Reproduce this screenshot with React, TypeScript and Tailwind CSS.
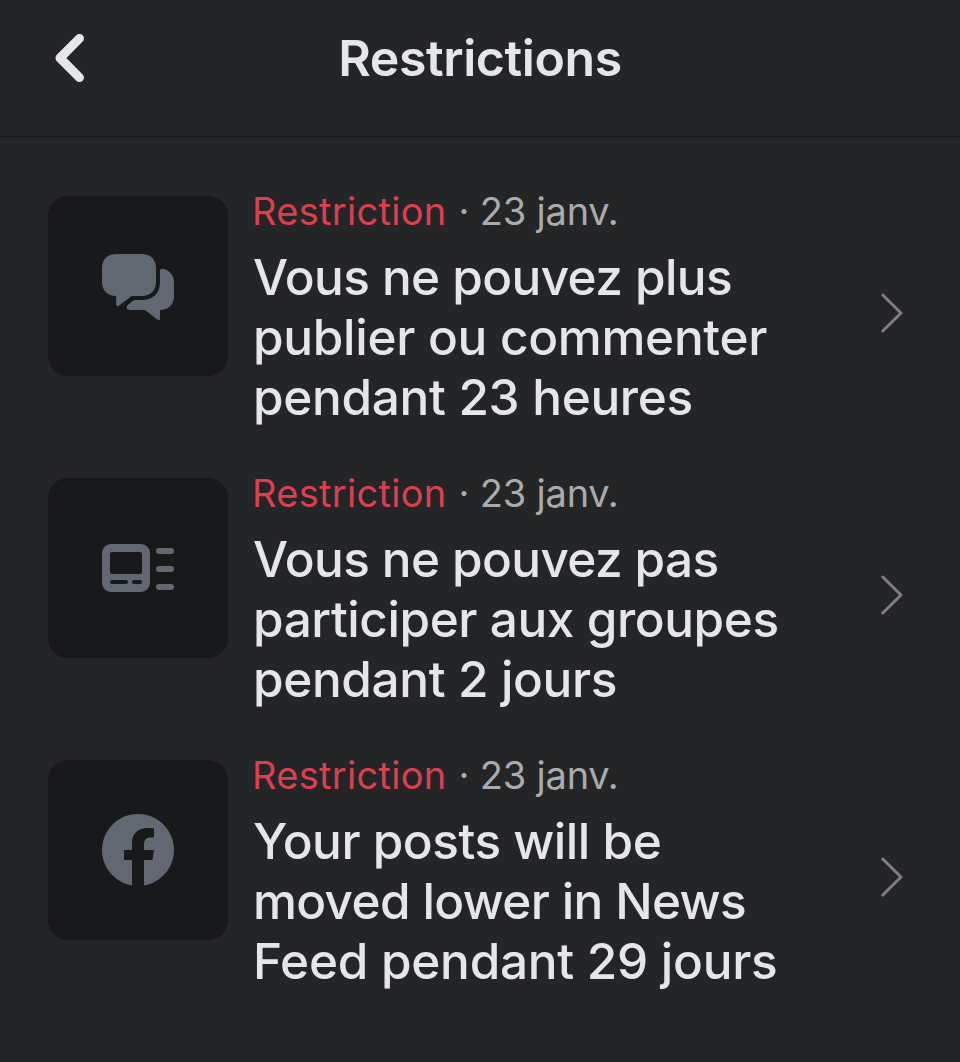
import React from "react";

function CommentsIcon() {
    return (
        <svg width="72" height="72" viewBox="0 0 72 72" fill="currentColor">
            <path d="M14 4H40C48.500 4 54 9.500 54 18V32C54 40.500 48.500 46 40 46H29.700L17 55.600C15.500 56.700 14.200 56 14.200 54.400V46C5.500 46 0 40.500 0 32V18C0 9.500 5.500 4 14 4Z" />
            <path d="M58 21C58 19.200 59.200 18.400 61 18.800C67.500 20.300 72 25.500 72 32V46C72 54.500 66.500 60 58 60V68.500C58 70.200 56.500 70.500 55.200 69.500L43 60H28C24.600 60 23.600 57 25.800 55L30.500 51C31.300 50.300 32 50 33 50H40C51 50 58 43 58 32Z" />
        </svg>
    );
}

function FeedIcon() {
    return (
        <svg width="72" height="72" viewBox="0 0 72 72" fill="currentColor">
            <path
                fillRule="evenodd"
                d="M9 12H39A9 9 0 0 1 48 21V51A9 9 0 0 1 39 60H9A9 9 0 0 1 0 51V21A9 9 0 0 1 9 12ZM10 20A2 2 0 0 0 8 22V40A2 2 0 0 0 10 42H38A2 2 0 0 0 40 40V22A2 2 0 0 0 38 20ZM10 48A2 2 0 0 0 10 52H24A2 2 0 0 0 24 48ZM32 48A2 2 0 0 0 32 52H38A2 2 0 0 0 38 48Z"
            />
            <rect x="54" y="16" width="18" height="6" rx="3" />
            <rect x="54" y="34" width="18" height="6" rx="3" />
            <rect x="54" y="52" width="18" height="6" rx="3" />
        </svg>
    );
}

function FacebookIcon() {
    return (
        <svg width="72" height="72" viewBox="0 0 72 72" fill="currentColor">
            <path d="M30 71.500A36 36 0 1 1 42 71.500V46H50.400L52 36H42V30.500C42 26 44 23.400 49 23.400H52V14.500C50 14.100 47.500 14 45.500 14C36 14 30 19.500 30 29V36H22V46H30Z" />
        </svg>
    );
}

const items = [
    {
        icon: <CommentsIcon />,
        lines: [
            { text: "Vous ne pouvez plus", tracking: "tracking-[-0.6px]" },
            { text: "publier ou commenter", tracking: "tracking-[-0.3px]" },
            { text: "pendant 23 heures", tracking: "tracking-[-0.32px]" },
        ],
    },
    {
        icon: <FeedIcon />,
        lines: [
            { text: "Vous ne pouvez pas", tracking: "tracking-[-0.62px]" },
            { text: "participer aux groupes", tracking: "tracking-[-0.43px]" },
            { text: "pendant 2 jours", tracking: "tracking-[-0.38px]" },
        ],
    },
    {
        icon: <FacebookIcon />,
        lines: [
            { text: "Your posts will be", tracking: "tracking-[-0.48px]" },
            { text: "moved lower in News", tracking: "tracking-[-0.65px]" },
            { text: "Feed pendant 29 jours", tracking: "tracking-[-0.27px]" },
        ],
    },
];

function App() {
    return (
        <div className="min-h-screen w-full bg-[#242527] font-['Inter',sans-serif] text-[#e4e6eb]">
            <header className="grid h-[137px] grid-cols-[1fr_auto_1fr] items-start border-b border-[#18191b] pt-7">
                <button className="ml-[50px] mt-[3px] w-10" aria-label="Retour">
                    <svg width="40" height="54" viewBox="0 0 40 54" fill="none">
                        <path
                            d="M29.500 7.400L10 27L29.500 46.600"
                            stroke="currentColor"
                            strokeWidth="9"
                            strokeLinecap="round"
                            strokeLinejoin="round"
                        />
                    </svg>
                </button>
                <h1 className="whitespace-nowrap text-[50px] font-semibold leading-[60px] tracking-[-0.4px]">
                    Restrictions
                </h1>
            </header>
            <ul className="flex flex-col gap-[50px] pl-12 pr-14 pt-[51px]">
                {items.map((item, index) => (
                    <li key={index} className="flex h-[232px]">
                        <div className="mt-2 flex size-[180px] shrink-0 items-center justify-center rounded-[20px] bg-[#18191b] text-[#626871]">
                            {item.icon}
                        </div>
                        <div className="ml-6 grow whitespace-nowrap">
                            <p className="h-[59px] text-[38px] leading-[46px] tracking-[-0.2px] text-[#a9abaf]">
                                <span className="mr-[1.5px] tracking-[0.3px] text-[#dc3f50]">Restriction</span> · 23 janv.
                            </p>
                            <h2 className="pl-px text-[49.5px] font-medium leading-[60px]">
                                {item.lines.map((line) => (
                                    <span key={line.text} className={`block ${line.tracking}`}>
                                        {line.text}
                                    </span>
                                ))}
                            </h2>
                        </div>
                        <svg
                            className="mt-[104px] shrink-0"
                            width="24"
                            height="42"
                            viewBox="0 0 24 42"
                            fill="none"
                        >
                            <path
                                d="M2.800 3L21 21L2.800 39"
                                stroke="#7e7f81"
                                strokeWidth="3"
                                strokeLinecap="round"
                                strokeLinejoin="round"
                            />
                        </svg>
                    </li>
                ))}
            </ul>
        </div>
    );
}

export default App;
